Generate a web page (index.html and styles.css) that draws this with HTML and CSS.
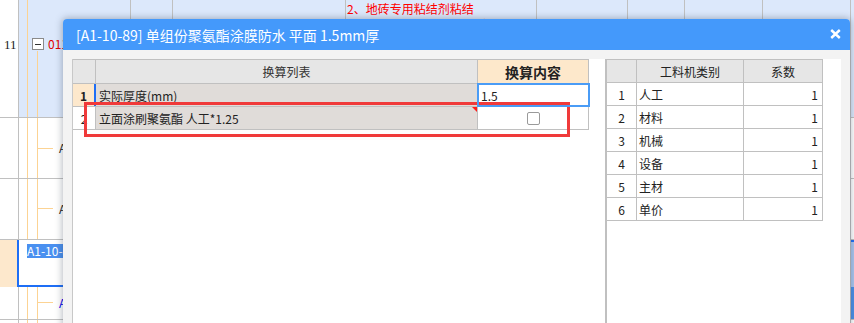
FILE: index.html
```html
<!DOCTYPE html>
<html lang="zh-CN">
<head>
<meta charset="utf-8">
<title>换算</title>
<link rel="stylesheet" href="styles.css">
</head>
<body>
<div class="screen">
  <div class="sheet">
    <div class="row r11">
      <div class="cell c0 rownum">11</div>
      <div class="cell c1 tree-top"><span class="minus"></span><span class="code">011001</span></div>
      <div class="cell c2"></div>
      <div class="cell c3"></div>
      <div class="cell c4"><div class="note">1、<br>2、地砖专用粘结剂粘结<br>3、厚1.5mm聚氨酯涂膜防水层</div></div>
      <div class="cell c5"></div>
      <div class="cell c6"></div>
      <div class="cell c7"></div>
      <div class="cell c8"></div>
      <div class="cell c9"></div>
    </div>
    <div class="row row-a">
      <div class="cell c0"></div>
      <div class="cell c1 tree by30"><span class="item">A1-10-87</span></div>
      <div class="cell spacer"></div>
      <div class="cell c9"></div>
    </div>
    <div class="row row-b">
      <div class="cell c0"></div>
      <div class="cell c1 tree by29"><span class="item">A1-10-88</span></div>
      <div class="cell spacer"></div>
      <div class="cell c9"></div>
    </div>
    <div class="row row-c">
      <div class="cell c0 cur"></div>
      <div class="cell c1 cursel"><span class="seltext">A1-10-89</span></div>
      <div class="cell spacer"></div>
      <div class="cell c9 edge-sel"></div>
    </div>
    <div class="row row-d">
      <div class="cell c0"></div>
      <div class="cell c1 tree by15"><span class="item blue">A1-10-90</span></div>
      <div class="cell spacer"></div>
      <div class="cell c9 edge-blue"></div>
    </div>
    <div class="row row-e">
      <div class="cell c0"></div>
      <div class="cell c1 tree by0"></div>
      <div class="cell spacer"></div>
      <div class="cell c9"></div>
    </div>
  </div>

  <div class="dialog">
    <div class="dlg-head">
      <span class="dlg-title">[A1-10-89] 单组份聚氨酯涂膜防水 平面 1.5mm厚</span>
      <svg class="close" width="11" height="10" viewBox="0 0 11 10"><path d="M1.2 1 L9.8 9 M9.8 1 L1.2 9" stroke="#fff" stroke-width="2.4" fill="none"/></svg>
    </div>
    <div class="dlg-body">
      <div class="left-pane">
        <div class="ltable">
          <div class="lrow lhead">
            <div class="lc n hd"></div>
            <div class="lc m hd center">换算列表</div>
            <div class="lc v hdv center">换算内容</div>
          </div>
          <div class="lrow">
            <div class="lc n cur-n center">1</div>
            <div class="lc m ro">实际厚度(mm)</div>
            <div class="lc v sel">1.5</div>
          </div>
          <div class="lrow">
            <div class="lc n center">2</div>
            <div class="lc m ro flag">立面涂刷聚氨酯 人工*1.25</div>
            <div class="lc v center"><span class="check"></span></div>
          </div>
        </div>
      </div>
      <div class="right-pane">
        <div class="rtable">
          <div class="trow thead">
            <div class="tc tn"></div>
            <div class="tc tm center">工料机类别</div>
            <div class="tc tv center">系数</div>
          </div>
          <div class="trow"><div class="tc tn center">1</div><div class="tc tm">人工</div><div class="tc tv right">1</div></div>
          <div class="trow"><div class="tc tn center">2</div><div class="tc tm">材料</div><div class="tc tv right">1</div></div>
          <div class="trow"><div class="tc tn center">3</div><div class="tc tm">机械</div><div class="tc tv right">1</div></div>
          <div class="trow"><div class="tc tn center">4</div><div class="tc tm">设备</div><div class="tc tv right">1</div></div>
          <div class="trow"><div class="tc tn center">5</div><div class="tc tm">主材</div><div class="tc tv right">1</div></div>
          <div class="trow"><div class="tc tn center">6</div><div class="tc tm">单价</div><div class="tc tv right">1</div></div>
        </div>
      </div>
    </div>
    <div class="mark"></div>
  </div>
</div>
</body>
</html>
```

FILE: styles.css
```css
html, body {
  margin: 0;
  padding: 0;
}
body {
  width: 854px;
  height: 323px;
  overflow: hidden;
  background: #fff;
  font-family: "Noto Sans CJK SC", "Noto Sans", sans-serif;
  font-size: 12px;
  color: #222;
}
.screen {
  position: relative;
  width: 854px;
  height: 323px;
  overflow: hidden;
}

/* background spreadsheet */
.sheet {
  display: flex;
  flex-direction: column;
  height: 323px;
}
.row {
  display: flex;
  flex: none;
  box-sizing: border-box;
  border-bottom: 1px solid #c0c0c0;
}
.cell {
  box-sizing: border-box;
  border-right: 1px solid #c0c0c0;
  flex: none;
}
.c0 { width: 19px; background: #fff; }
.c1 { width: 112px; }
.c2 { width: 42px; }
.c3 { width: 173px; }
.c4 { width: 191px; overflow: hidden; }
.c5 { width: 91px; }
.c6 { width: 57px; }
.c7 { width: 78px; }
.c8 { width: 88px; }
.c9 { flex: 1; border-right: none; }
.spacer { width: 720px; }

.r11 { height: 118px; background: #dce8fb; }
.row-a { height: 61px; }
.row-b { height: 61px; }
.row-c { height: 47px; border-bottom: none; }
.row-d { height: 33px; }
.row-e { flex: 1; border-bottom: none; }

.rownum {
  padding: 37px 0 0 4px;
  line-height: 16px;
  font-family: "Liberation Serif", serif;
  font-size: 13px;
  color: #222;
}
.tree-top {
  display: flex;
  align-items: flex-start;
  padding: 38px 0 0 13px;
  background:
    linear-gradient(#fcd393, #fcd393) 8px 0 / 1px 100% no-repeat,
    linear-gradient(#fcd393, #fcd393) 18px 51px / 1px 100% no-repeat;
}
.minus {
  width: 12px;
  height: 12px;
  box-sizing: border-box;
  border: 1px solid #8a8a8a;
  background: linear-gradient(#333, #333) center / 6px 1px no-repeat, #fff;
  flex: none;
}
.code {
  margin-left: 4px;
  color: #e00000;
  line-height: 12px;
  white-space: nowrap;
}
.note {
  margin-top: -15px;
  padding-left: 1px;
  line-height: 16px;
  color: #ff0000;
  white-space: nowrap;
}

.tree {
  --by: 30px;
  display: flex;
  align-items: center;
  padding-left: 40px;
  background:
    linear-gradient(#fcd393, #fcd393) 8px 0 / 1px 100% no-repeat,
    linear-gradient(#fcd393, #fcd393) 18px 0 / 1px 100% no-repeat,
    linear-gradient(#fcd393, #fcd393) 18px var(--by) / 16px 1px no-repeat;
}
.by30 { --by: 30px; }
.by29 { --by: 29px; }
.by15 { --by: 15px; }
.by0 { --by: -5px; }
.item { white-space: nowrap; color: #222; line-height: 14px; }
.item.blue { color: #0000ee; }

.cur { width: 17px; background: #fde8cc; border-right: none; }
.cursel {
  width: 114px;
  border-left: 2px solid #1e6ef5;
  border-bottom: 2px solid #1e6ef5;
  padding: 2px 0 0 8px;
}
.seltext {
  display: inline-block;
  background: #4a90f0;
  color: #fff;
  line-height: 14px;
  white-space: nowrap;
}
.edge-sel { background: #a9c6ef; border-top: 2px solid #1e6ef5; }
.edge-blue { background: #4a8fe8; }

/* dialog */
.dialog {
  position: absolute;
  left: 63px;
  top: 19px;
  width: 787px;
  height: 320px;
  display: flex;
  flex-direction: column;
  background: #f3f3f3;
  border-radius: 4px 4px 0 0;
  box-shadow: 0 0 7px 1px rgba(50, 60, 80, 0.35);
}
.dlg-head {
  height: 31px;
  flex: none;
  display: flex;
  align-items: center;
  justify-content: space-between;
  padding: 0 9px 0 13px;
  background: #4499fb;
  border-radius: 4px 4px 0 0;
  color: #fff;
  font-size: 14px;
}
.dlg-title { white-space: nowrap; }
.close { margin-top: -2px; }
.dlg-body {
  flex: 1;
  display: flex;
  padding: 9px 9px 0;
}
.left-pane {
  width: 533px;
  flex: none;
  box-sizing: border-box;
  border-left: 1px solid #c8c8c8;
  background: #fff;
}
.right-pane {
  width: 236px;
  flex: none;
  box-sizing: border-box;
  border-left: 2px solid #c0c0c0;
  background: #fff;
}

.ltable {
  width: 516px;
  border-top: 1px solid #c0c0c0;
}
.lrow {
  display: flex;
  height: 23px;
  box-sizing: border-box;
  border-bottom: 1px solid #c0c0c0;
}
.lrow.lhead { height: 24px; }
.lc {
  box-sizing: border-box;
  border-right: 1px solid #c0c0c0;
  display: flex;
  align-items: center;
  white-space: nowrap;
  color: #222;
}
.n { width: 23px; }
.m { width: 382px; padding-left: 3px; }
.v { width: 111px; padding-left: 3px; }
.center { justify-content: center; padding-left: 0; }
.right { justify-content: flex-end; padding-right: 4px; }
.hd { background: #e6e6e6; color: #333; }
.hdv { background: #fde8cb; font-weight: bold; font-size: 14px; color: #222; }
.cur-n {
  background: #fde8cc;
  font-weight: bold;
  border-right: 2px solid #1e6ef5;
}
.ro { background: #e0dcd9; }
.flag { position: relative; }
.flag::after {
  content: "";
  position: absolute;
  top: 0;
  right: 0;
  border-top: 5px solid #ff1a1a;
  border-left: 5px solid transparent;
}
.sel {
  position: relative;
  z-index: 1;
  outline: 2px solid #4a9cf6;
  outline-offset: -1px;
}
.check {
  width: 13px;
  height: 13px;
  box-sizing: border-box;
  border: 1px solid #9a9a9a;
  border-radius: 2px;
  background: #fff;
}

.rtable {
  width: 216px;
  border-top: 1px solid #c0c0c0;
}
.trow {
  display: flex;
  height: 23px;
  box-sizing: border-box;
  border-bottom: 1px solid #c0c0c0;
}
.tc {
  box-sizing: border-box;
  border-right: 1px solid #c0c0c0;
  display: flex;
  align-items: center;
  white-space: nowrap;
  color: #222;
}
.tn { width: 30px; }
.tm { width: 107px; padding-left: 2px; }
.tv { width: 79px; }
.thead .tc { background: #e6e6e6; }
.thead .tm { padding-left: 0; }

.mark {
  position: absolute;
  left: 21px;
  top: 83px;
  width: 486px;
  height: 35px;
  box-sizing: border-box;
  border: 3px solid #f03a3a;
}
```
